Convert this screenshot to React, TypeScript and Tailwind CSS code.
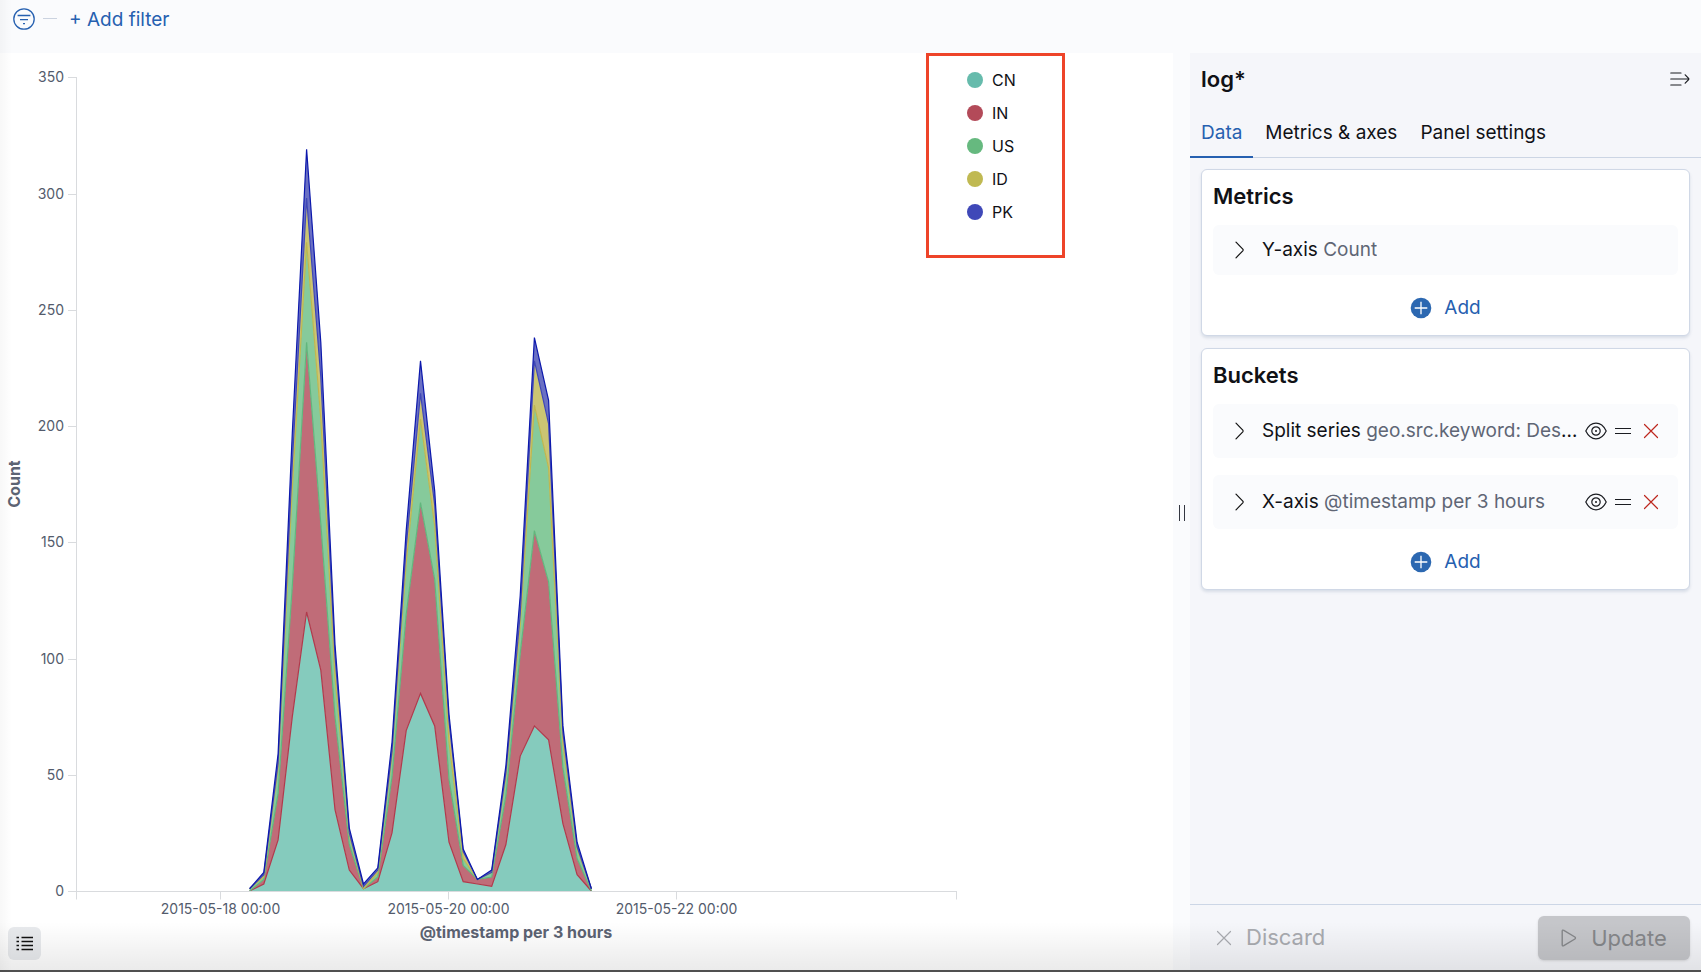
import type { ReactNode } from "react";

const BLUE = "#2660b0";

/* ---------- chart data: documents per 3 hours, stacked totals ---------- */

const totals = {
  CN: [0, 3, 22, 75, 120, 95, 35, 9, 1, 4, 25, 69, 85, 71, 21, 4, 3, 2, 20, 58, 71, 65, 29, 7, 0],
  IN: [0, 5, 42, 131, 236, 158, 75, 20, 1, 6, 49, 119, 167, 134, 48, 11, 5, 6, 41, 102, 155, 133, 53, 14, 0],
  US: [1, 6, 53, 173, 279, 203, 92, 24, 1, 8, 58, 141, 203, 157, 64, 14, 5, 8, 49, 114, 209, 182, 63, 18, 1],
  ID: [1, 7, 55, 184, 298, 221, 101, 25, 2, 9, 60, 148, 214, 166, 73, 17, 5, 8, 51, 119, 228, 201, 68, 19, 1],
  PK: [1, 8, 59, 197, 319, 236, 106, 27, 3, 10, 64, 155, 228, 172, 76, 18, 5, 9, 54, 127, 238, 211, 71, 21, 1],
};

type Key = keyof typeof totals;

const series: { key: Key; fill: string; line: string; dot: string }[] = [
  { key: "CN", fill: "#85cbbd", line: "#b03a4c", dot: "#66bbac" },
  { key: "IN", fill: "#c06c78", line: "#62b67d", dot: "#b34a59" },
  { key: "US", fill: "#86ca9b", line: "#bfb74f", dot: "#66b97f" },
  { key: "ID", fill: "#cbc573", line: "#3f47b6", dot: "#c0b952" },
  { key: "PK", fill: "#6a70c4", line: "#0c18ac", dot: "#3f48b8" },
];

const BASE = 838;
const px = (i: number) => 249.6 + i * 14.24;
const py = (v: number) => BASE - v * 2.325;
const line = (vals: number[]) => vals.map((v, i) => `${px(i).toFixed(1)},${py(v).toFixed(1)}`).join(" ");
const band = (top: number[], bottom: number[]) => {
  const back = bottom.map((v, i) => `${px(i).toFixed(1)},${py(v).toFixed(1)}`).reverse();
  return `${line(top)} ${back.join(" ")}`;
};

const xTicks = [
  { x: 220.5, label: "2015-05-18 00:00" },
  { x: 448.5, label: "2015-05-20 00:00" },
  { x: 676.5, label: "2015-05-22 00:00" },
];

function AreaChart() {
  return (
    <svg
      className="h-full w-full overflow-visible"
      viewBox="0 0 926 919"
      preserveAspectRatio="xMinYMin meet"
      role="img"
      aria-label="Count by @timestamp per 3 hours"
    >
      {series.map((s, n) => (
        <polygon
          key={s.key}
          fill={s.fill}
          points={band(totals[s.key], n === 0 ? totals.CN.map(() => 0) : totals[series[n - 1].key])}
        />
      ))}
      {series.map((s) => (
        <polyline key={s.key} fill="none" stroke={s.line} strokeWidth={1.2} points={line(totals[s.key])} />
      ))}

      <g stroke="#d9dbde" strokeWidth={1} fill="none">
        <path d="M76.5 24V846.5M68 838.5H956M956.5 838V846.5" />
        {xTicks.map((t) => (
          <path key={t.label} d={`M${t.x} 838V846.5`} />
        ))}
        {[50, 100, 150, 200, 250, 300, 350].map((v) => (
          <path key={v} d={`M68 ${Math.round(py(v)) + 0.5}H76`} />
        ))}
      </g>

      <g className="fill-[#535b6c] text-sm">
        {[0, 50, 100, 150, 200, 250, 300, 350].map((v) => (
          <text key={v} x={64} y={Math.round(py(v)) + 5} textAnchor="end">
            {v}
          </text>
        ))}
        {xTicks.map((t) => (
          <text key={t.label} x={t.x} y={861} textAnchor="middle">
            {t.label}
          </text>
        ))}
      </g>
      <g className="fill-[#5c6373] text-base font-bold">
        <text x={516} y={885} textAnchor="middle">
          @timestamp per 3 hours
        </text>
        <text transform="rotate(-90 20 431)" x={20} y={431} textAnchor="middle">
          Count
        </text>
      </g>
    </svg>
  );
}

/* ---------- icons ---------- */

function FilterIcon() {
  return (
    <svg width="22" height="22" viewBox="0 0 22 22" fill="none" stroke={BLUE} strokeWidth="1.3">
      <circle cx="11" cy="11" r="10.2" />
      <path d="M4.6 7.5H17.4M7 11.7H15M10 15.7H12" />
    </svg>
  );
}

function ChevronIcon() {
  return (
    <svg width="10" height="18" viewBox="0 0 10 18" fill="none" stroke="#111" strokeWidth="1.2" strokeLinecap="round" strokeLinejoin="round">
      <path d="M1 1.2L7.8 8.2Q8.5 9 7.8 9.8L1 16.8" />
    </svg>
  );
}

function EyeIcon() {
  return (
    <svg width="22" height="18" viewBox="0 0 22 18" fill="none" stroke="#1a1c21" strokeWidth="1.2">
      <path d="M0.8 9C3 4.5 6.6 1.2 11 1.2S19 4.5 21.2 9C19 13.5 15.4 16.8 11 16.8S3 13.5 0.8 9Z" />
      <circle cx="11" cy="9" r="4.2" />
      <circle cx="11" cy="9" r="1" fill="#1a1c21" stroke="none" />
    </svg>
  );
}

function GrabIcon() {
  return (
    <svg width="16" height="8" viewBox="0 0 16 8" stroke="#1a1c21" strokeWidth="1.2">
      <path d="M0 1.5H16M0 6.5H16" />
    </svg>
  );
}

function CrossIcon({ color }: { color: string }) {
  return (
    <svg width="16" height="16" viewBox="0 0 16 16" stroke={color} strokeWidth="1.2" strokeLinecap="round">
      <path d="M1.5 1.5L14.5 14.5M14.5 1.5L1.5 14.5" />
    </svg>
  );
}

function PlusInCircleIcon() {
  return (
    <svg width="22" height="22" viewBox="0 0 22 22">
      <circle cx="11" cy="11" r="10.3" fill="#2c68b1" />
      <path d="M4.7 11H17.3M11 4.7V17.3" stroke="#fff" strokeWidth="1.3" />
    </svg>
  );
}

function MenuRightIcon() {
  return (
    <svg width="20" height="14" viewBox="0 0 20 14" fill="none" stroke="#1a1c21" strokeWidth="1.2" strokeLinecap="round">
      <path d="M0.8 1H11M0.8 7H18.6M0.8 13H11M15.2 2.8L18.6 6.3Q19.2 7 18.6 7.7L15.2 11.2" />
    </svg>
  );
}

function PlayIcon() {
  return (
    <svg width="16" height="18" viewBox="0 0 16 18" fill="none" stroke="#85878a" strokeWidth="1.4" strokeLinejoin="round">
      <path d="M1.2 2.3Q1.2 0.6 2.8 1.4L13.9 8Q15 9 13.9 10L2.8 16.6Q1.2 17.4 1.2 15.7Z" />
    </svg>
  );
}

function ListIcon() {
  return (
    <svg width="18" height="16" viewBox="0 0 18 16" stroke="#111" strokeWidth="1.3">
      <path d="M0.5 1.5H3M5.5 1.5H17M0.5 5.5H3M5.5 5.5H17M0.5 9.5H3M5.5 9.5H17M0.5 13.5H3M5.5 13.5H17" />
    </svg>
  );
}

/* ---------- side panel ---------- */

function AggRow({ title, detail, actions }: { title: string; detail: string; actions?: boolean }) {
  return (
    <div className={actions ? "flex h-[54px] items-center rounded-md bg-[#fafbfd] pr-[19px]" : "flex h-[50px] items-center rounded-md bg-[#fafbfd] pr-[19px]"}>
      <button type="button" className="flex min-w-0 flex-1 items-center text-left">
        <span className="flex w-[49px] shrink-0 pl-[22px]">
          <ChevronIcon />
        </span>
        <span className="truncate">
          {title} <span className="text-[#5f6675]">{detail}</span>
        </span>
      </button>
      {actions && (
        <div className="flex shrink-0 items-center pl-1">
          <button type="button" aria-label="Disable aggregation">
            <EyeIcon />
          </button>
          <button type="button" aria-label="Change order" className="ml-2">
            <GrabIcon />
          </button>
          <button type="button" aria-label="Remove" className="ml-3">
            <CrossIcon color="#bd271e" />
          </button>
        </div>
      )}
    </div>
  );
}

function Group({ title, children }: { title: string; children: ReactNode }) {
  return (
    <section className="rounded-md border border-[#d0d8e6] bg-white px-[11px] pb-[11px] shadow-[0_2px_3px_rgba(150,165,190,0.3)]">
      <h2 className="mb-[2px] flex h-[53px] items-center text-[22px] font-semibold">{title}</h2>
      {children}
      <div className="flex justify-center pt-[17px]">
        <button type="button" className="flex h-8 items-center gap-3 text-[#2660b0]">
          <PlusInCircleIcon />
          Add
        </button>
      </div>
    </section>
  );
}

export default function App() {
  return (
    <div className="relative flex min-h-screen flex-col bg-white font-['Inter',sans-serif] text-[#101116]">
      <header className="flex h-[53px] items-start bg-[#fafbfd] pt-2 pl-[13px] text-[19px]">
        <button type="button" aria-label="Filter options" className="flex h-[22px]">
          <FilterIcon />
        </button>
        <span className="mt-[10px] ml-2 h-px w-[14px] bg-[#cbd3e0]" />
        <button type="button" className="ml-3 leading-6 text-[#2660b0]">
          + Add filter
        </button>
      </header>

      <div className="flex flex-1">
        <main className="relative flex flex-1">
          <div className="min-w-0 flex-1">
            <AreaChart />
          </div>
          <div className="w-[247px] shrink-0">
            <ul className="flex h-[205px] w-[139px] flex-col border-3 border-[#ee4429] pt-[7px] pl-[38px]">
              {series.map((s) => (
                <li key={s.key} className="flex h-[33px] items-center gap-[9px] text-base">
                  <span className="size-4 rounded-full" style={{ backgroundColor: s.dot }} />
                  {s.key}
                </li>
              ))}
            </ul>
          </div>
          <button
            type="button"
            aria-label="Toggle legend"
            className="absolute bottom-3 left-2 flex size-[33px] items-center justify-center rounded-md bg-[#e8eaed]"
          >
            <ListIcon />
          </button>
        </main>

        <div className="flex w-[17px] items-center justify-center bg-[#fafbfd]" role="separator" aria-orientation="vertical">
          <span className="h-4 w-[6px] border-x border-[#343741]" />
        </div>

        <aside className="flex w-[511px] shrink-0 flex-col bg-[#f5f6fa] text-[19px]">
          <div className="flex h-[54px] items-center justify-between px-[11px] pb-[2px]">
            <h1 className="text-[22px] font-semibold">log*</h1>
            <button type="button" aria-label="Collapse panel">
              <MenuRightIcon />
            </button>
          </div>
          <div className="flex h-[51px] border-b border-[#ccd5e4]" role="tablist">
            <button type="button" role="tab" aria-selected="true" className="-mb-px border-b-2 border-[#2660b0] px-[11px] pt-[3px] text-[#2660b0]">
              Data
            </button>
            <button type="button" role="tab" aria-selected="false" className="px-3 pt-[2px]">
              Metrics &amp; axes
            </button>
            <button type="button" role="tab" aria-selected="false" className="px-[11px] pt-[2px]">
              Panel settings
            </button>
          </div>

          <div className="flex flex-1 flex-col gap-3 px-[11px] pt-[11px]">
            <Group title="Metrics">
              <AggRow title="Y-axis" detail="Count" />
            </Group>
            <Group title="Buckets">
              <div className="flex flex-col gap-[17px]">
                <AggRow title="Split series" detail="geo.src.keyword: Descending" actions />
                <AggRow title="X-axis" detail="@timestamp per 3 hours" actions />
              </div>
            </Group>
          </div>

          <footer className="flex h-[68px] items-start justify-between border-t border-[#ccd6e6] pt-[11px] pr-[11px] pl-[26px] text-[22px] text-[#a9abb0]">
            <button type="button" disabled className="flex h-[43px] items-center gap-[14px]">
              <CrossIcon color="#a9abb0" />
              Discard
            </button>
            <button type="button" disabled className="flex h-11 w-[152px] items-center justify-center gap-[14px] rounded-md bg-[#c5c6ca] text-[#85878a] shadow-sm">
              <PlayIcon />
              Update
            </button>
          </footer>
        </aside>
      </div>

      <div className="pointer-events-none absolute inset-x-0 bottom-0 h-[50px] border-b-2 border-[#505050] bg-linear-to-b from-black/0 to-black/8" />
      <div className="pointer-events-none absolute inset-y-0 left-0 w-3 bg-linear-to-r from-black/3 to-black/0" />
    </div>
  );
}
